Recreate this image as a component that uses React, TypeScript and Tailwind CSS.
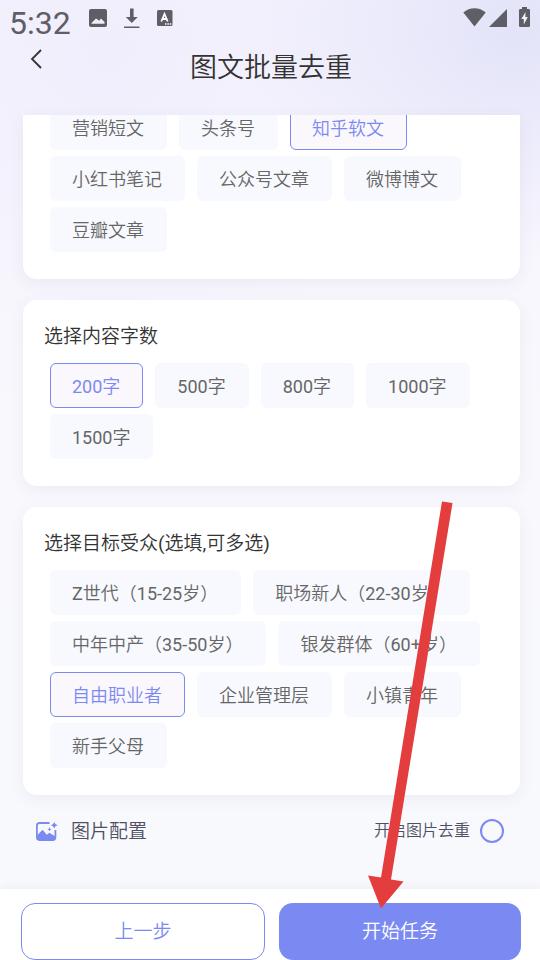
import { useState } from "react";

const CONTENT_TYPES = [
  "营销短文",
  "头条号",
  "知乎软文",
  "小红书笔记",
  "公众号文章",
  "微博博文",
  "豆瓣文章",
];
const WORD_COUNTS = ["200字", "500字", "800字", "1000字", "1500字"];
const AUDIENCES = [
  "Z世代（15-25岁）",
  "职场新人（22-30岁）",
  "中年中产（35-50岁）",
  "银发群体（60+岁）",
  "自由职业者",
  "企业管理层",
  "小镇青年",
  "新手父母",
];

function Chip({ label, active, onClick }: { label: string; active: boolean; onClick: () => void }) {
  return (
    <button
      type="button"
      aria-pressed={active}
      onClick={onClick}
      className={`h-[45px] pt-0.5 pl-[21px] pr-[22px] rounded-md border text-lg whitespace-nowrap ${
        active ? "border-[#7b8af2] bg-[#faf7fd] text-[#7b8af2]" : "border-[#f8f9fe] bg-[#f8f9fe] text-[#666666]"
      }`}
    >
      {label}
    </button>
  );
}

function ChipGroup({ items, selected, onToggle }: { items: string[]; selected: string[]; onToggle: (item: string) => void }) {
  return (
    <div className="flex flex-wrap gap-x-3 gap-y-1.5">
      {items.map((item) => (
        <Chip key={item} label={item} active={selected.includes(item)} onClick={() => onToggle(item)} />
      ))}
    </div>
  );
}

function StatusBar() {
  return (
    <div className="flex items-start h-[42px] pl-[9px] pr-[10px] text-[#5e5e66]">
      <span className="text-[32px] leading-[46px]">5:32</span>
      <svg className="w-[18px] h-[18px] mt-[9px] ml-[18px]" viewBox="0 0 18 18" fill="currentColor">
        <path fillRule="evenodd" d="M2 0h14a2 2 0 0 1 2 2v14a2 2 0 0 1-2 2H2a2 2 0 0 1-2-2V2a2 2 0 0 1 2-2ZM2.500 14.800h13V13L12 9.500l-1.800 2.300L7 9.500 2.500 14Z" />
      </svg>
      <svg className="w-4 h-5 mt-2 ml-[17px]" viewBox="0 0 16 20" fill="currentColor">
        <path d="M6 0.500h3.600v8.500h4.200L7.800 15 1.800 9H6ZM0 18.500h15.500v2H0Z" />
      </svg>
      <svg className="w-4 h-4 mt-[10px] ml-[17px]" viewBox="0 0 16 16">
        <rect width="15.500" height="16" rx="1.500" fill="currentColor" />
        <path d="M4.300 11.500 7.500 4 10.700 11.500M5.400 9h4.200" stroke="white" strokeWidth="1.800" fill="none" />
        <path d="M8 14h1.500M10.400 14h1.500M12.800 14h1.500" stroke="white" strokeWidth="1.400" />
      </svg>
      <svg className="w-[23px] h-[19px] mt-2 ml-auto" viewBox="0 0 23 19" fill="currentColor">
        <path d="M0.300 4.500C6.500-1.300 16.500-1.300 22.700 4.500L11.500 18.500Z" />
      </svg>
      <svg className="w-[18px] h-[18px] mt-[9px] ml-[3px]" viewBox="0 0 18 18" fill="currentColor">
        <path d="M18 0v18H0Z" />
      </svg>
      <svg className="w-[11px] h-5 mt-[7px] ml-3" viewBox="0 0 11 20">
        <path fill="currentColor" d="M3 0h5v2h1.800A1.200 1.200 0 0 1 11 3.200v15.600A1.200 1.200 0 0 1 9.800 20H1.200A1.200 1.200 0 0 1 0 18.800V3.200A1.200 1.200 0 0 1 1.200 2H3Z" />
        <path fill="#f0f0fc" d="M6.600 5 2.300 12h2.500v5.500L8.800 10H6.300Z" />
      </svg>
    </div>
  );
}

function ImageSparkIcon() {
  return (
    <svg className="w-[22px] h-[19px]" viewBox="0 0 22 19" fill="#7b8af2">
      <path d="M13.500 1H3.500A2.700 2.700 0 0 0 0.900 3.700v11.600A2.700 2.700 0 0 0 3.500 18h13.200a2.700 2.700 0 0 0 2.700-2.700V8" fill="none" stroke="#7b8af2" strokeWidth="1.800" />
      <path d="M1 13.500 5.800 8.400a1 1 0 0 1 1.500 0l3.400 4.300 1.900-1.500a1 1 0 0 1 1.500 0l5.300 3.300V16a2 2 0 0 1-2 2H3a2 2 0 0 1-2-2Z" />
      <path d="M18.200 0Q18.900 2.600 21.800 3.200 18.900 3.800 18.200 6.400 17.500 3.800 14.900 3.200 17.500 2.600 18.200 0Z" />
      <path d="M13.500 5.200Q13.800 7 15.500 7.300 13.800 7.600 13.500 9.300 13.200 7.600 11.500 7.300 13.200 7 13.500 5.200Z" />
    </svg>
  );
}

export default function App() {
  const [type, setType] = useState("知乎软文");
  const [words, setWords] = useState("200字");
  const [audiences, setAudiences] = useState(["自由职业者"]);
  const [dedupe, setDedupe] = useState(false);

  const toggleAudience = (item: string) =>
    setAudiences((prev) => (prev.includes(item) ? prev.filter((a) => a !== item) : [...prev, item]));

  return (
    <div className="relative flex flex-col min-h-screen overflow-hidden bg-[#f8f9fd] bg-[radial-gradient(ellipse_280px_230px_at_96%_30px,#e3e3f9,transparent),radial-gradient(ellipse_340px_300px_at_20%_50px,#f0eefc,transparent),linear-gradient(#f6f4fe,#f8f7fd_300px,#f8f9fd_700px)] font-['Roboto','Noto_Sans_CJK_SC_DemiLight','Noto_Sans_CJK_SC',sans-serif]">
      {/* HEADER */}
      <header className="h-[115px]">
        <StatusBar />
        <div className="grid grid-cols-[72px_1fr_70px]">
          <button type="button" aria-label="返回" className="flex justify-end items-start w-[42px] pt-[7px] text-[#333333]">
            <svg className="w-3 h-5" viewBox="0 0 12 20" fill="none" stroke="currentColor" strokeWidth="1.800">
              <path d="M11 1 2 10l9 9" />
            </svg>
          </button>
          <h1 className="text-center text-[27px] leading-[52px] font-[350] text-[#333333]">图文批量去重</h1>
        </div>
      </header>

      {/* OPTIONS */}
      <main className="flex-1 flex flex-col gap-[21px] pl-[23px] pr-5">
        <section className="rounded-b-[14px] bg-white overflow-hidden pl-[27px] pr-5 pb-[27px] shadow-[0_4px_16px_rgba(90,80,140,0.07)]">
          <div className="-mt-2.5">
            <ChipGroup items={CONTENT_TYPES} selected={[type]} onToggle={setType} />
          </div>
        </section>

        <section className="rounded-[14px] bg-white pl-[27px] pr-5 pt-[21px] pb-[27px] shadow-[0_4px_16px_rgba(90,80,140,0.07)]">
          <h2 className="-ml-1.5 mb-2.5 text-[19px] leading-8 text-[#333333]">选择内容字数</h2>
          <ChipGroup items={WORD_COUNTS} selected={[words]} onToggle={setWords} />
        </section>

        <section className="rounded-[14px] bg-white pl-[27px] pr-5 pt-[21px] pb-[27px] shadow-[0_4px_16px_rgba(90,80,140,0.07)]">
          <h2 className="-ml-1.5 mb-2.5 text-[19px] leading-8 text-[#333333]">选择目标受众(选填,可多选)</h2>
          <ChipGroup items={AUDIENCES} selected={audiences} onToggle={toggleAudience} />
        </section>

        <div className="flex items-center h-[30px] pl-[13px] pr-4 text-[#505060]">
          <ImageSparkIcon />
          <span className="ml-[13px] pt-0.5 text-[19px]">图片配置</span>
          <label htmlFor="dedupe" className="ml-auto mr-2.5 text-base">
            开启图片去重
          </label>
          <input
            id="dedupe"
            type="checkbox"
            checked={dedupe}
            onChange={(e) => setDedupe(e.target.checked)}
            className="appearance-none w-6 h-6 rounded-full border-2 border-[#7b8af2] checked:bg-[#7b8af2]"
          />
        </div>
      </main>

      {/* ACTIONS */}
      <footer className="flex gap-3.5 pl-[21px] pr-[19px] pt-3.5 bg-white shadow-[0_-2px_8px_rgba(60,60,90,0.06)]">
        <button type="button" className="flex-1 h-[57px] pt-0.5 rounded-[14px] border border-[#7b8af2] text-[19px] text-[#7b8af2]">
          上一步
        </button>
        <button type="button" className="flex-1 h-[57px] pt-0.5 rounded-[14px] bg-[#7b8af2] text-[19px] text-white">
          开始任务
        </button>
      </footer>

      {/* pointer to the start button */}
      <svg className="absolute right-[86px] bottom-[51px] w-[86px] h-[408px] pointer-events-none" viewBox="0 0 86 408" fill="#e43d3d">
        <path d="M74 0.500 84.500 2 23 378.500 35.500 380.500 13 407.500 0 374.500 13 376.500Z" />
      </svg>
    </div>
  );
}
